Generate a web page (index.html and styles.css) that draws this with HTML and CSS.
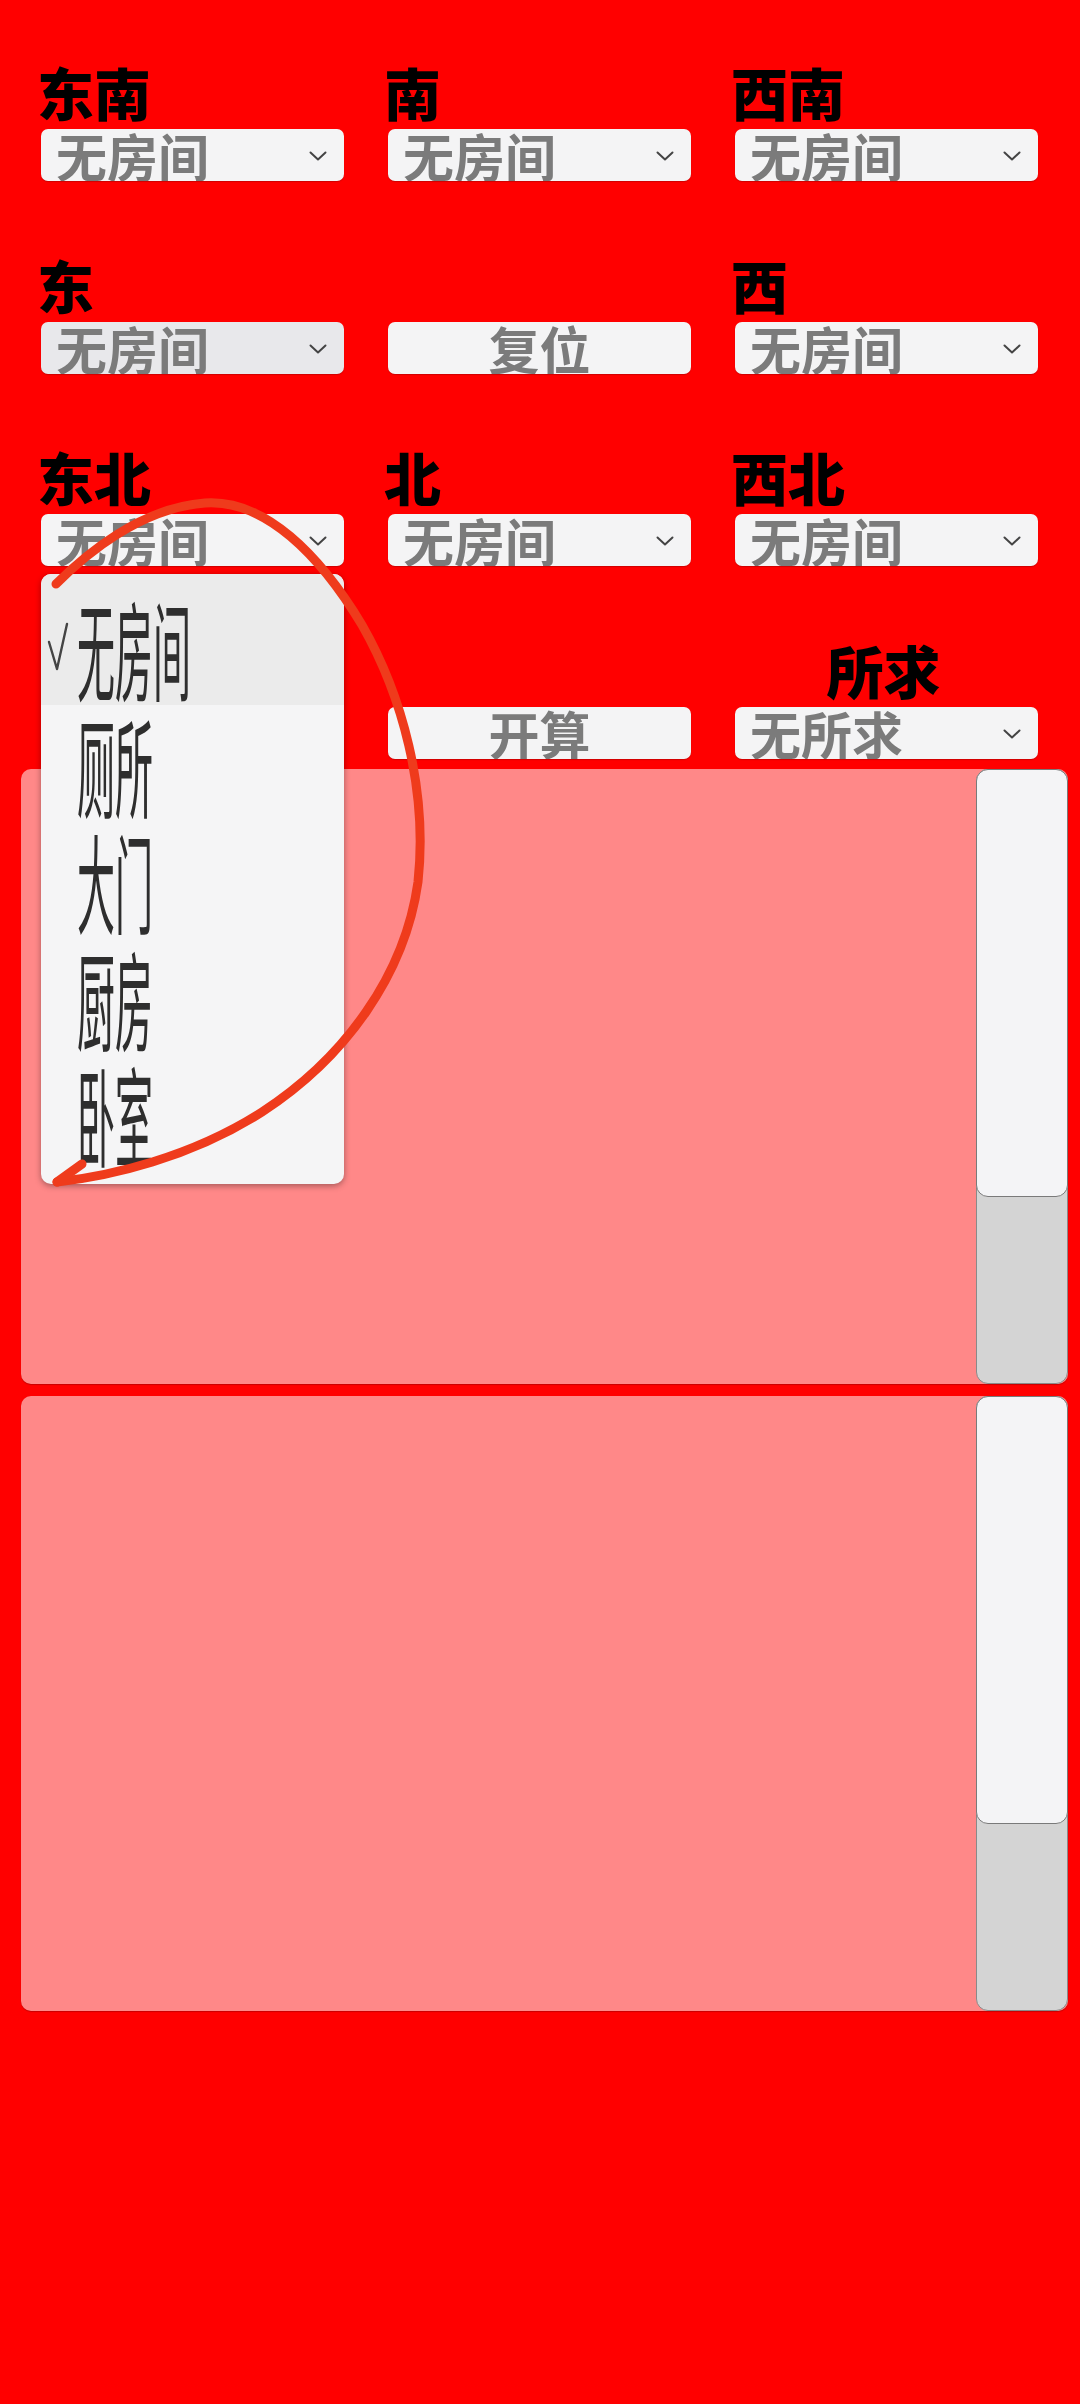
FILE: index.html
```html
<!DOCTYPE html>
<html lang="zh-CN">
<head>
<meta charset="utf-8">
<title>方位</title>
<link rel="stylesheet" href="styles.css">
</head>
<body>
<div class="page">
  <div class="grid">
    <div class="cell">
      <div class="label">东南</div>
      <div class="select"><span class="val">无房间</span><svg class="chev" viewBox="0 0 18 10"><polyline points="1.5,1.5 9,8.5 16.5,1.5"/></svg></div>
    </div>
    <div class="cell">
      <div class="label">南</div>
      <div class="select"><span class="val">无房间</span><svg class="chev" viewBox="0 0 18 10"><polyline points="1.5,1.5 9,8.5 16.5,1.5"/></svg></div>
    </div>
    <div class="cell">
      <div class="label">西南</div>
      <div class="select"><span class="val">无房间</span><svg class="chev" viewBox="0 0 18 10"><polyline points="1.5,1.5 9,8.5 16.5,1.5"/></svg></div>
    </div>

    <div class="cell">
      <div class="label">东</div>
      <div class="select focused"><span class="val">无房间</span><svg class="chev" viewBox="0 0 18 10"><polyline points="1.5,1.5 9,8.5 16.5,1.5"/></svg></div>
    </div>
    <div class="cell">
      <div class="label"></div>
      <div class="select button"><span class="val">复位</span></div>
    </div>
    <div class="cell">
      <div class="label">西</div>
      <div class="select"><span class="val">无房间</span><svg class="chev" viewBox="0 0 18 10"><polyline points="1.5,1.5 9,8.5 16.5,1.5"/></svg></div>
    </div>

    <div class="cell open">
      <div class="label">东北</div>
      <div class="select"><span class="val">无房间</span><svg class="chev" viewBox="0 0 18 10"><polyline points="1.5,1.5 9,8.5 16.5,1.5"/></svg></div>
      <div class="dropdown">
        <div class="item selected">
          <svg class="check" viewBox="0 0 22 50"><polyline points="2,20 10,47 20,2"/></svg>
          <span class="opt">无房间</span>
        </div>
        <div class="item"><span class="opt">厕所</span></div>
        <div class="item"><span class="opt">大门</span></div>
        <div class="item"><span class="opt">厨房</span></div>
        <div class="item"><span class="opt">卧室</span></div>
      </div>
    </div>
    <div class="cell">
      <div class="label">北</div>
      <div class="select"><span class="val">无房间</span><svg class="chev" viewBox="0 0 18 10"><polyline points="1.5,1.5 9,8.5 16.5,1.5"/></svg></div>
    </div>
    <div class="cell">
      <div class="label">西北</div>
      <div class="select"><span class="val">无房间</span><svg class="chev" viewBox="0 0 18 10"><polyline points="1.5,1.5 9,8.5 16.5,1.5"/></svg></div>
    </div>

    <div class="cell">
      <div class="label"></div>
    </div>
    <div class="cell">
      <div class="label"></div>
      <div class="select button"><span class="val">开算</span></div>
    </div>
    <div class="cell">
      <div class="label center">所求</div>
      <div class="select"><span class="val">无所求</span><svg class="chev" viewBox="0 0 18 10"><polyline points="1.5,1.5 9,8.5 16.5,1.5"/></svg></div>
    </div>
  </div>

  <div class="panel first">
    <div class="track"><div class="thumb"></div></div>
  </div>
  <div class="panel second">
    <div class="track"><div class="thumb"></div></div>
  </div>

  <svg class="annot" viewBox="0 0 1080 1300">
    <path d="M56,584 C85,555 140,508 205,503 C265,499 320,555 362,625 C402,695 428,790 418,882 C405,975 345,1058 262,1112 C190,1158 110,1176 57,1182"/>
    <path d="M57,1182 L82,1164"/>
  </svg>
</div>
</body>
</html>
```

FILE: styles.css
```css
* {
  box-sizing: border-box;
}

html, body {
  margin: 0;
  padding: 0;
  background: #ff0000;
}

body {
  font-family: "Noto Sans CJK SC", "Noto Sans", sans-serif;
}

.page {
  position: relative;
  width: 1080px;
  min-height: 2404px;
  background: #ff0000;
  overflow: hidden;
}

.grid {
  display: grid;
  grid-template-columns: repeat(3, 303px);
  column-gap: 44px;
  row-gap: 72.5px;
  padding: 61px 41px 0 41px;
}

.cell {
  display: flex;
  flex-direction: column;
  position: relative;
}

.label {
  height: 60px;
  line-height: 60px;
  font-size: 57px;
  font-weight: 900;
  color: #000;
  margin-bottom: 8px;
  margin-left: -4px;
  white-space: nowrap;
}

.label.center {
  text-align: center;
  margin-left: -6px;
}

.select {
  height: 52px;
  background: #f4f4f5;
  border-radius: 7px;
  display: flex;
  align-items: flex-start;
  justify-content: space-between;
  padding: 0 17px 0 15px;
  overflow: hidden;
  box-shadow: 0 1px 1px rgba(120, 0, 0, 0.35);
}

.select.focused {
  background: #e8e8eb;
}

.select.button {
  justify-content: center;
  padding: 0;
}

.val {
  display: block;
  font-size: 51px;
  line-height: 52px;
  font-weight: 700;
  color: #7b7b7b;
  white-space: nowrap;
}

.chev {
  width: 18px;
  height: 10px;
  margin-top: 22px;
  flex: none;
}

.chev polyline {
  fill: none;
  stroke: #444;
  stroke-width: 2;
  stroke-linecap: round;
  stroke-linejoin: round;
}

.dropdown {
  position: absolute;
  top: 128px;
  left: 0;
  width: 303px;
  height: 610px;
  background: #f5f5f6;
  border-radius: 10px;
  box-shadow: 0 2px 6px rgba(0, 0, 0, 0.35);
  padding-top: 14px;
  z-index: 5;
  overflow: hidden;
}

.item {
  height: 116.5px;
  display: flex;
  align-items: flex-start;
  padding-left: 36px;
  position: relative;
}

.item.selected {
  background: #ebebeb;
  margin-top: -14px;
  height: 130.5px;
  padding-top: 14px;
  padding-left: 6px;
}

.check {
  width: 22px;
  height: 50px;
  margin-top: 34px;
  margin-right: 8px;
  flex: none;
}

.check polyline {
  fill: none;
  stroke: #444;
  stroke-width: 2.4;
  stroke-linejoin: round;
  stroke-linecap: round;
}

.opt {
  display: inline-block;
  font-size: 38px;
  line-height: 38px;
  font-weight: 400;
  color: #2e2e2e;
  white-space: nowrap;
  transform-origin: 0 0;
  transform: scaleY(2.85);
  margin-top: 5px;
}

.panel {
  height: 615px;
  margin: 0 12px 0 21px;
  background: #ff8888;
  border-radius: 10px;
  display: flex;
  justify-content: flex-end;
  box-shadow: 0 1px 1px rgba(120, 0, 0, 0.4);
}

.panel.first {
  margin-top: 10.5px;
}

.panel.second {
  margin-top: 12px;
}

.track {
  width: 92px;
  height: 100%;
  background: #d4d4d4;
  border: 1px solid #8a8a8a;
  border-radius: 12px;
  display: flex;
  flex-direction: column;
}

.thumb {
  height: 428px;
  margin: -1px -1px 0 -1px;
  background: #f4f4f6;
  border: 1px solid #7a7a7a;
  border-radius: 12px;
}

.annot {
  position: absolute;
  top: 0;
  left: 0;
  width: 1080px;
  height: 1300px;
  pointer-events: none;
  z-index: 10;
}

.annot path {
  fill: none;
  stroke: #ef3b1c;
  stroke-width: 9;
  stroke-linecap: round;
  stroke-linejoin: round;
}
```
